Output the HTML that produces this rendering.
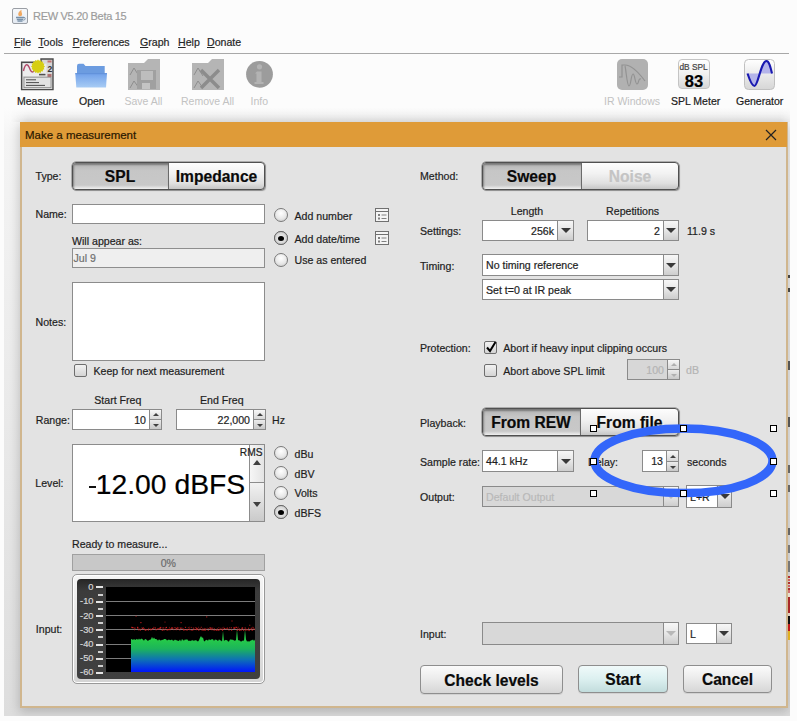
<!DOCTYPE html><html><head><meta charset="utf-8"><style>
html,body{margin:0;padding:0;width:797px;height:721px;overflow:hidden;background:#fcfcfc;position:relative;font-family:"Liberation Sans", sans-serif;}
.t{position:absolute;white-space:pre;line-height:0;-webkit-text-stroke:0.2px currentColor;}
.b{position:absolute;}
u{text-decoration:underline;text-underline-offset:1px;}
</style></head><body>
<div class="b" style="left:12px;top:8px;width:16px;height:16px;border:1.3px solid #9a9ea4;border-radius:2px;box-sizing:border-box;background:linear-gradient(#f6f8fb,#e4eaf2);"></div>
<svg class="b" style="left:12px;top:8px" width="16" height="16"><path d="M9.5 1.8 C7 3.5 5.5 5.5 6.5 7.5 C7.2 8.5 9.5 8.5 10 7 C10.6 5.5 9 4.5 9.5 1.8 Z" fill="#f0a050" opacity="0.9"/><path d="M4 9.5 h8 M4.8 11.5 h6.5 M5.5 13.2 h5" stroke="#7890a8" stroke-width="1.3"/><path d="M12 9.3 c1.6 0 1.6 2.6 -0.5 3" stroke="#7890a8" stroke-width="1" fill="none"/></svg>
<div class="t" style="left:33.00px;top:16.49px;font-size:11px;color:#9c9c9c;letter-spacing:-0.3px;">REW V5.20 Beta 15</div>
<div class="t" style="left:14.00px;top:41.93px;font-size:10.6px;color:#262626;"><u>F</u>ile</div>
<div class="t" style="left:38.30px;top:41.93px;font-size:10.6px;color:#262626;"><u>T</u>ools</div>
<div class="t" style="left:72.50px;top:41.93px;font-size:10.6px;color:#262626;"><u>P</u>references</div>
<div class="t" style="left:140.00px;top:41.93px;font-size:10.6px;color:#262626;"><u>G</u>raph</div>
<div class="t" style="left:178.00px;top:41.93px;font-size:10.6px;color:#262626;"><u>H</u>elp</div>
<div class="t" style="left:207.00px;top:41.93px;font-size:10.6px;color:#262626;"><u>D</u>onate</div>
<div class="b" style="left:4px;top:53px;width:785px;height:1px;background:#a8a8a8;"></div>
<div class="b" style="left:4px;top:108px;width:786px;height:608px;background:linear-gradient(#fcfcfc,#f4f4f4 32px,#eaeaea 292px,#dddddd);"></div>
<svg class="b" style="left:18px;top:54px" width="40" height="40">
<path d="M3.6 8.3 H23 V5 H35 V35.6 H3.6 Z" fill="#d6d6d6" stroke="#4a4a4a" stroke-width="1.4"/>
<rect x="5" y="9.6" width="23.5" height="12.5" fill="#ececec"/>
<path d="M5.5 17 C7 9.5 9.5 9.5 11 13 C12.5 17 14.5 21 17 15" stroke="#b04868" stroke-width="1.4" fill="none"/>
<text x="29.5" y="17.5" font-size="8.5" font-weight="bold" font-family="Liberation Sans" fill="#333">2</text>
<rect x="29.5" y="6.5" width="4" height="2" fill="#c07070"/>
<rect x="29.5" y="20" width="4" height="3" fill="#b07070"/>
<rect x="21" y="19.8" width="6.5" height="1.6" fill="#505050"/>
<rect x="6" y="23.2" width="27" height="10.4" fill="#e2e2e2" stroke="#8a8a8a" stroke-width="0.8"/>
<path d="M8 25.8 h10 M8 28.6 h13 M8 31.4 h19" stroke="#3a3a3a" stroke-width="0.9"/>
<polygon points="27.00,12.50 25.69,13.63 26.47,15.18 24.82,15.72 24.95,17.45 23.22,17.32 22.68,18.97 21.13,18.19 20.00,19.50 18.87,18.19 17.32,18.97 16.78,17.32 15.05,17.45 15.18,15.72 13.53,15.18 14.31,13.63 13.00,12.50 14.31,11.37 13.53,9.82 15.18,9.28 15.05,7.55 16.78,7.68 17.32,6.03 18.87,6.81 20.00,5.50 21.13,6.81 22.68,6.03 23.22,7.68 24.95,7.55 24.82,9.28 26.47,9.82 25.69,11.37" fill="#d6ce12"/>
</svg>
<svg class="b" style="left:74px;top:62px" width="34" height="28">
<path d="M3 4 Q3 1.7 5 1.7 H9.5 L11.5 4 H30.7 V13 H3 Z" fill="#6c9ce0"/>
<path d="M1.3 11.2 H33 L32 25.6 H2.3 Z" fill="url(#fg)"/><path d="M1.3 11.7 H33" stroke="#5f8fd8" stroke-width="1"/>
<defs><linearGradient id="fg" x1="0" y1="0" x2="0" y2="1"><stop offset="0" stop-color="#70a0ea"/><stop offset="1" stop-color="#a8ccf4"/></linearGradient></defs>
</svg>
<svg class="b" style="left:127px;top:58px" width="34" height="33">
<path d="M1 5 h16 l4 -4 h12 v31 h-32 z" fill="#b5b5b5"/>
<path d="M3 17 l4 -7 l5 8 M3 30 l4 -7 l5 7" stroke="#8e8e8e" stroke-width="1" fill="none"/>
<rect x="10" y="12" width="19" height="19" fill="#a0a0a0"/><rect x="14" y="13" width="12" height="9" fill="#bdbdbd"/><rect x="15" y="25" width="8" height="6" fill="#c4c4c4"/>
</svg>
<svg class="b" style="left:191px;top:58px" width="34" height="33">
<path d="M1 5 h16 l4 -4 h12 v31 h-32 z" fill="#b5b5b5"/>
<path d="M3 17 l4 -7 l5 8 M3 30 l4 -7 l5 7" stroke="#8e8e8e" stroke-width="1" fill="none"/>
<path d="M10 12 l18 18 M28 12 l-18 18" stroke="#8c8c8c" stroke-width="3.5"/>
</svg>
<svg class="b" style="left:245px;top:60px" width="30" height="30">
<circle cx="14.5" cy="14.3" r="13.4" fill="#9c9c9c"/>
<circle cx="14.5" cy="6.8" r="2.6" fill="#b3b3b3"/>
<path d="M12 11.5 h4.5 v10.5 h2 v2 h-9 v-2 h2 v-8.5 h-1.5 z" fill="#b3b3b3"/>
</svg>
<svg class="b" style="left:616px;top:58px" width="33" height="33">
<rect x="1" y="1" width="31" height="31" rx="5" fill="#b1b1b1"/>
<path d="M3 19 h3 v-12 h3 c6 0 14 8 20 16 M9 8 c1 3 2 20 4 20 c2 0 2 -12 4 -12 c2 0 2 10 4 10 c2 0 1 -6 4 -5" stroke="#929292" stroke-width="1.2" fill="none"/>
</svg>
<div class="b" style="left:678px;top:59px;width:32px;height:30px;border:1px solid #c4c4c4;border-radius:4px;box-sizing:border-box;background:linear-gradient(#ffffff,#f0f0f0 50%,#d8d8d8);"></div>
<div class="t" style="left:393.50px;width:600px;text-align:center;top:66.82px;font-size:8.3px;color:#444;">dB SPL</div>
<div class="t" style="left:394.00px;width:600px;text-align:center;top:80.68px;font-size:16.5px;color:#000;font-weight:700;">83</div>
<svg class="b" style="left:744px;top:59px" width="31" height="31">
<defs><linearGradient id="gg" x1="0" y1="0" x2="0" y2="1"><stop offset="0" stop-color="#ffffff"/><stop offset="1" stop-color="#d6d6d6"/></linearGradient></defs>
<rect x="0.5" y="0.5" width="30" height="30" rx="4" fill="url(#gg)" stroke="#c0c0c0"/>
<path d="M3.5 14.5 C6 22 8 27 10.5 27 C14 27 17 2 22.5 2 C25 2 26.5 8 28 14.5 Z" fill="#b4b4ea"/>
<path d="M3.5 14.5 C6 22 8 27 10.5 27 C14 27 17 2 22.5 2 C25 2 26.5 8 28 14.5" fill="none" stroke="#1818b0" stroke-width="2.1"/>
</svg>
<div class="t" style="left:17.00px;top:101.06px;font-size:10.5px;color:#202020;">Measure</div>
<div class="t" style="left:79.00px;top:101.06px;font-size:10.5px;color:#202020;">Open</div>
<div class="t" style="left:124.50px;top:101.06px;font-size:10.5px;color:#c2c2c2;-webkit-text-stroke:0;">Save All</div>
<div class="t" style="left:181.00px;top:101.06px;font-size:10.5px;color:#c2c2c2;-webkit-text-stroke:0;">Remove All</div>
<div class="t" style="left:250.50px;top:101.06px;font-size:10.5px;color:#c2c2c2;-webkit-text-stroke:0;">Info</div>
<div class="t" style="left:604.00px;top:101.06px;font-size:10.5px;color:#c2c2c2;-webkit-text-stroke:0;">IR Windows</div>
<div class="t" style="left:671.00px;top:101.06px;font-size:10.5px;color:#202020;">SPL Meter</div>
<div class="t" style="left:736.00px;top:101.06px;font-size:10.5px;color:#202020;">Generator</div>
<div class="b" style="left:4px;top:108px;width:786px;height:608px;overflow:hidden;"><div class="b" style="left:6px;top:0px;width:788px;height:14px;background:linear-gradient(rgba(0,0,0,0),rgba(0,0,0,0.07));-webkit-mask-image:linear-gradient(to right,transparent,#000 18px,#000 770px,transparent 788px);"></div><div class="b" style="left:16px;top:14px;width:768px;height:586px;background:#e3e3e3;border:2px solid #d0b68e;border-top:none;box-sizing:border-box;box-shadow:0 3px 10px 1px rgba(0,0,0,0.19);"></div></div>
<div class="b" style="left:20px;top:122px;width:767px;height:25px;background:#df9b38;"></div>
<div class="t" style="left:25.00px;top:134.62px;font-size:11.5px;color:#2a1800;">Make a measurement</div>
<svg class="b" style="left:765px;top:129px" width="12" height="12"><path d="M1 1 L11 11 M11 1 L1 11" stroke="#222" stroke-width="1.2"/></svg>
<div class="t" style="left:35.50px;top:176.33px;font-size:10.6px;color:#1e1e1e;">Type:</div>
<div class="b" style="left:72px;top:162px;width:193px;height:28px;border:1px solid #505050;border-radius:4px;box-shadow:0 0 0 0.5px #777, 1px 1px 1px rgba(0,0,0,0.25);box-sizing:border-box;background:linear-gradient(#fdfdfd,#f2f2f2 40%,#e0e0e0 78%,#c6c6c6);overflow:hidden;"><div style="position:absolute;left:0;top:0;width:95px;height:100%;background:linear-gradient(#b4b4b4,#c6c6c6 30%,#c8c8c8 85%,#f0f0f0 100%);box-shadow:inset 1px 2px 2px rgba(0,0,0,0.35);border-right:1px solid #6a6a6a;"></div></div>
<div class="t" style="left:-180.00px;width:600px;text-align:center;top:177.19px;font-size:15.6px;color:#0a0a0a;font-weight:700;">SPL</div>
<div class="t" style="left:-83.50px;width:600px;text-align:center;top:177.19px;font-size:15.6px;color:#0a0a0a;font-weight:700;">Impedance</div>
<div class="t" style="left:35.50px;top:213.83px;font-size:10.6px;color:#1e1e1e;">Name:</div>
<div class="b" style="left:72px;top:204px;width:193px;height:20px;background:#fff;border:1px solid #8c8c8c;box-sizing:border-box;"></div>
<div class="t" style="left:72.00px;top:240.93px;font-size:10.6px;color:#1e1e1e;">Will appear as:</div>
<div class="b" style="left:72px;top:248px;width:193px;height:20px;background:#efefef;border:1px solid #8e8e8e;box-sizing:border-box;"></div>
<div class="t" style="left:73.50px;top:257.83px;font-size:10.6px;color:#707070;">Jul 9</div>
<div class="b" style="left:274px;top:208px;width:14px;height:14px;border-radius:50%;box-sizing:border-box;border:1px solid #7a7a7a;background:radial-gradient(circle at 50% 35%,#ffffff,#e8e8e8 55%,#c4c4c4);"></div>
<div class="t" style="left:294.50px;top:215.93px;font-size:10.6px;color:#1e1e1e;">Add number</div>
<div class="b" style="left:274px;top:231px;width:14px;height:14px;border-radius:50%;box-sizing:border-box;border:1px solid #7a7a7a;background:radial-gradient(circle at 50% 35%,#ffffff,#e8e8e8 55%,#c4c4c4);"></div>
<div class="b" style="left:274px;top:231px;width:14px;height:14px;border-radius:50%;box-sizing:border-box;border:1px solid #6a6a6a;background:radial-gradient(circle at 50% 50%,#f4f4f4 0,#dadada 55%,#b8b8b8 100%);"></div>
<div class="b" style="left:278px;top:235.5px;width:6px;height:5px;border-radius:50%;background:#000;"></div>
<div class="t" style="left:294.50px;top:238.83px;font-size:10.6px;color:#1e1e1e;">Add date/time</div>
<div class="b" style="left:274px;top:253px;width:14px;height:14px;border-radius:50%;box-sizing:border-box;border:1px solid #7a7a7a;background:radial-gradient(circle at 50% 35%,#ffffff,#e8e8e8 55%,#c4c4c4);"></div>
<div class="t" style="left:294.50px;top:260.33px;font-size:10.6px;color:#1e1e1e;">Use as entered</div>
<svg class="b" style="left:375px;top:208px" width="14" height="14"><rect x="0.5" y="0.5" width="13" height="13" fill="#f4f4f4" stroke="#707070"/><path d="M1 3.5 h12" stroke="#707070"/><rect x="3" y="6" width="2" height="2" fill="#808080"/><rect x="3" y="9.5" width="2" height="2" fill="#808080"/><path d="M6.5 7 h5 M6.5 10.5 h5" stroke="#808080"/></svg>
<svg class="b" style="left:375px;top:231px" width="14" height="14"><rect x="0.5" y="0.5" width="13" height="13" fill="#f4f4f4" stroke="#707070"/><path d="M1 3.5 h12" stroke="#707070"/><rect x="3" y="6" width="2" height="2" fill="#808080"/><rect x="3" y="9.5" width="2" height="2" fill="#808080"/><path d="M6.5 7 h5 M6.5 10.5 h5" stroke="#808080"/></svg>
<div class="t" style="left:35.50px;top:321.83px;font-size:10.6px;color:#1e1e1e;">Notes:</div>
<div class="b" style="left:72px;top:282px;width:193px;height:79px;background:#fff;border:1px solid #8c8c8c;box-sizing:border-box;"></div>
<div class="b" style="left:74px;top:364px;width:13px;height:13px;border:1px solid #6e6e6e;border-radius:2px;box-sizing:border-box;background:linear-gradient(#f2f2f2,#d4d4d4);"></div>
<div class="t" style="left:93.50px;top:370.73px;font-size:10.6px;color:#1e1e1e;">Keep for next measurement</div>
<div class="t" style="left:94.30px;top:400.23px;font-size:10.6px;color:#1e1e1e;">Start Freq</div>
<div class="t" style="left:200.00px;top:400.23px;font-size:10.6px;color:#1e1e1e;">End Freq</div>
<div class="t" style="left:35.80px;top:420.03px;font-size:10.6px;color:#1e1e1e;">Range:</div>
<div class="b" style="left:72px;top:409px;width:90px;height:21px;background:#fff;border:1px solid #8a8a8a;box-sizing:border-box;"></div>
<div class="b" style="left:149px;top:409px;width:13px;height:11px;background:linear-gradient(#f7f7f7,#d8d8d8);border:1px solid #8a8a8a;box-sizing:border-box;"></div>
<div class="b" style="left:149px;top:419px;width:13px;height:11px;background:linear-gradient(#ececec,#c8c8c8);border:1px solid #8a8a8a;box-sizing:border-box;"></div>
<div class="b" style="left:152.50px;top:413.25px;width:0;height:0;border-left:3.0px solid transparent;border-right:3.0px solid transparent;border-bottom:3px solid #404040;"></div>
<div class="b" style="left:152.50px;top:423.75px;width:0;height:0;border-left:3.0px solid transparent;border-right:3.0px solid transparent;border-top:3px solid #404040;"></div>
<div class="t" style="right:651.00px;top:419.83px;font-size:10.6px;color:#1e1e1e;">10</div>
<div class="b" style="left:176px;top:409px;width:90px;height:21px;background:#fff;border:1px solid #8a8a8a;box-sizing:border-box;"></div>
<div class="b" style="left:253px;top:409px;width:13px;height:11px;background:linear-gradient(#f7f7f7,#d8d8d8);border:1px solid #8a8a8a;box-sizing:border-box;"></div>
<div class="b" style="left:253px;top:419px;width:13px;height:11px;background:linear-gradient(#ececec,#c8c8c8);border:1px solid #8a8a8a;box-sizing:border-box;"></div>
<div class="b" style="left:256.50px;top:413.25px;width:0;height:0;border-left:3.0px solid transparent;border-right:3.0px solid transparent;border-bottom:3px solid #404040;"></div>
<div class="b" style="left:256.50px;top:423.75px;width:0;height:0;border-left:3.0px solid transparent;border-right:3.0px solid transparent;border-top:3px solid #404040;"></div>
<div class="t" style="right:547.00px;top:419.83px;font-size:10.6px;color:#1e1e1e;">22,000</div>
<div class="t" style="left:272.00px;top:420.03px;font-size:10.6px;color:#1e1e1e;">Hz</div>
<div class="t" style="left:35.30px;top:483.13px;font-size:10.6px;color:#1e1e1e;">Level:</div>
<div class="b" style="left:72px;top:444px;width:193px;height:78px;background:#fff;border:1px solid #8c8c8c;box-sizing:border-box;"></div>
<div class="b" style="left:249px;top:444px;width:16px;height:39px;background:linear-gradient(90deg,#f6f6f6,#e4e4e4);border:1px solid #8c8c8c;box-sizing:border-box;"></div>
<div class="b" style="left:249px;top:482px;width:16px;height:40px;background:linear-gradient(#f2f2f2,#cacaca);border:1px solid #8c8c8c;box-sizing:border-box;"></div>
<div class="b" style="left:252.50px;top:459.50px;width:0;height:0;border-left:4.5px solid transparent;border-right:4.5px solid transparent;border-bottom:5px solid #404040;"></div>
<div class="b" style="left:252.50px;top:501.50px;width:0;height:0;border-left:4.5px solid transparent;border-right:4.5px solid transparent;border-top:5px solid #404040;"></div>
<div class="t" style="left:95.75px;top:484.49px;font-size:28.3px;color:#000;">12.00 dBFS</div>
<div class="b" style="left:88.5px;top:485.8px;width:7.299999999999997px;height:2.0px;background:#111;"></div>
<div class="t" style="right:534.50px;top:453.47px;font-size:10.2px;color:#1e1e1e;">RMS</div>
<div class="b" style="left:274px;top:446px;width:14px;height:14px;border-radius:50%;box-sizing:border-box;border:1px solid #7a7a7a;background:radial-gradient(circle at 50% 35%,#ffffff,#e8e8e8 55%,#c4c4c4);"></div>
<div class="t" style="left:294.50px;top:453.63px;font-size:10.6px;color:#1e1e1e;">dBu</div>
<div class="b" style="left:274px;top:466px;width:14px;height:14px;border-radius:50%;box-sizing:border-box;border:1px solid #7a7a7a;background:radial-gradient(circle at 50% 35%,#ffffff,#e8e8e8 55%,#c4c4c4);"></div>
<div class="t" style="left:294.50px;top:473.63px;font-size:10.6px;color:#1e1e1e;">dBV</div>
<div class="b" style="left:274px;top:485.5px;width:14px;height:14px;border-radius:50%;box-sizing:border-box;border:1px solid #7a7a7a;background:radial-gradient(circle at 50% 35%,#ffffff,#e8e8e8 55%,#c4c4c4);"></div>
<div class="t" style="left:294.50px;top:493.13px;font-size:10.6px;color:#1e1e1e;">Volts</div>
<div class="b" style="left:274px;top:505px;width:14px;height:14px;border-radius:50%;box-sizing:border-box;border:1px solid #7a7a7a;background:radial-gradient(circle at 50% 35%,#ffffff,#e8e8e8 55%,#c4c4c4);"></div>
<div class="b" style="left:274px;top:505px;width:14px;height:14px;border-radius:50%;box-sizing:border-box;border:1px solid #6a6a6a;background:radial-gradient(circle at 50% 50%,#f4f4f4 0,#dadada 55%,#b8b8b8 100%);"></div>
<div class="b" style="left:278px;top:509.5px;width:6px;height:5px;border-radius:50%;background:#000;"></div>
<div class="t" style="left:294.50px;top:512.63px;font-size:10.6px;color:#1e1e1e;">dBFS</div>
<div class="t" style="left:72.00px;top:544.33px;font-size:10.6px;color:#1e1e1e;">Ready to measure...</div>
<div class="b" style="left:72px;top:554px;width:193px;height:17px;background:#c8c8c8;border:1px solid #a0a0a0;box-sizing:border-box;"></div>
<div class="t" style="left:-131.70px;width:600px;text-align:center;top:562.73px;font-size:10.6px;color:#6c6c6c;">0%</div>
<div class="b" style="left:72px;top:574px;width:193px;height:110px;border-radius:5px;background:linear-gradient(#f6f6f6,#d4d4d4);border:1px solid #999;box-sizing:border-box;box-shadow:inset 0 0 0 1px #fff;"></div>
<div class="b" style="left:77px;top:579px;width:183px;height:100px;border-radius:4px;background:linear-gradient(#262626,#3c3c3c 12px,#404040);"></div>
<div class="b" style="left:106px;top:587px;width:149px;height:85px;background:#000;"></div>
<div class="t" style="right:703.50px;top:587.18px;font-size:9.3px;color:#d6d6d6;">0</div>
<div class="b" style="left:96px;top:586px;width:7px;height:2px;background:#e4e4e4;"></div>
<div class="b" style="left:98px;top:594px;width:5px;height:2px;background:#cfcfcf;"></div>
<div class="t" style="right:703.50px;top:601.48px;font-size:9.3px;color:#d6d6d6;">-10</div>
<div class="b" style="left:96px;top:601px;width:7px;height:2px;background:#e4e4e4;"></div>
<div class="b" style="left:98px;top:608px;width:5px;height:2px;background:#cfcfcf;"></div>
<div class="b" style="left:106px;top:601px;width:149px;height:1px;background:#7c7c7c;"></div>
<div class="t" style="right:703.50px;top:615.68px;font-size:9.3px;color:#d6d6d6;">-20</div>
<div class="b" style="left:96px;top:615px;width:7px;height:2px;background:#e4e4e4;"></div>
<div class="b" style="left:98px;top:622px;width:5px;height:2px;background:#cfcfcf;"></div>
<div class="b" style="left:106px;top:615px;width:149px;height:1px;background:#7c7c7c;"></div>
<div class="t" style="right:703.50px;top:629.98px;font-size:9.3px;color:#d6d6d6;">-30</div>
<div class="b" style="left:96px;top:629px;width:7px;height:2px;background:#e4e4e4;"></div>
<div class="b" style="left:98px;top:636px;width:5px;height:2px;background:#cfcfcf;"></div>
<div class="b" style="left:106px;top:629px;width:149px;height:1px;background:#7c7c7c;"></div>
<div class="t" style="right:703.50px;top:644.18px;font-size:9.3px;color:#d6d6d6;">-40</div>
<div class="b" style="left:96px;top:644px;width:7px;height:2px;background:#e4e4e4;"></div>
<div class="b" style="left:98px;top:651px;width:5px;height:2px;background:#cfcfcf;"></div>
<div class="b" style="left:106px;top:644px;width:149px;height:1px;background:#7c7c7c;"></div>
<div class="t" style="right:703.50px;top:658.28px;font-size:9.3px;color:#d6d6d6;">-50</div>
<div class="b" style="left:96px;top:658px;width:7px;height:2px;background:#e4e4e4;"></div>
<div class="b" style="left:98px;top:665px;width:5px;height:2px;background:#cfcfcf;"></div>
<div class="b" style="left:106px;top:658px;width:149px;height:1px;background:#7c7c7c;"></div>
<div class="t" style="right:703.50px;top:672.18px;font-size:9.3px;color:#d6d6d6;">-60</div>
<div class="b" style="left:96px;top:672px;width:7px;height:2px;background:#e4e4e4;"></div>
<svg class="b" style="left:106px;top:586px" width="149" height="86">
<defs><linearGradient id="sp" x1="0" y1="53" x2="0" y2="86" gradientUnits="userSpaceOnUse"><stop offset="0" stop-color="#26cc46"/><stop offset="0.3" stop-color="#1cb45c"/><stop offset="0.62" stop-color="#0e72b4"/><stop offset="1" stop-color="#0014fc"/></linearGradient></defs>
<path d="M25 86 L25 53 L25.0 53.3 L26.0 52.9 L27.0 54.2 L28.0 52.7 L29.0 53.9 L30.0 53.5 L31.0 52.7 L32.0 53.9 L33.0 52.6 L34.0 53.7 L35.0 52.7 L36.0 52.8 L37.0 53.7 L38.0 54.7 L39.0 52.9 L40.0 53.2 L41.0 54.2 L42.0 55.1 L43.0 54.1 L44.0 53.7 L45.0 53.2 L46.0 50.8 L47.0 52.9 L48.0 51.4 L49.0 53.0 L50.0 53.0 L51.0 53.5 L52.0 54.8 L53.0 53.2 L54.0 54.2 L55.0 54.4 L56.0 53.7 L57.0 54.1 L58.0 52.9 L59.0 52.9 L60.0 53.3 L61.0 54.5 L62.0 53.9 L63.0 53.6 L64.0 54.3 L65.0 53.9 L66.0 53.5 L67.0 54.8 L68.0 54.6 L69.0 53.4 L70.0 54.3 L71.0 54.2 L72.0 55.1 L73.0 54.7 L74.0 53.6 L75.0 55.4 L76.0 53.1 L77.0 53.9 L78.0 54.8 L79.0 53.2 L80.0 54.1 L81.0 53.0 L82.0 54.6 L83.0 54.9 L84.0 54.4 L85.0 55.2 L86.0 53.7 L87.0 54.7 L88.0 54.5 L89.0 54.4 L90.0 54.1 L91.0 55.1 L92.0 55.4 L93.0 54.2 L94.0 51.7 L95.0 50.1 L96.0 51.8 L97.0 51.6 L98.0 55.6 L99.0 55.1 L100.0 53.7 L101.0 54.0 L102.0 54.7 L103.0 53.1 L104.0 54.2 L105.0 53.5 L106.0 53.3 L107.0 53.2 L108.0 55.0 L109.0 53.4 L110.0 53.7 L111.0 54.1 L112.0 55.3 L113.0 53.3 L114.0 54.2 L115.0 54.5 L116.0 55.4 L117.0 45.0 L118.0 55.3 L119.0 53.8 L120.0 54.2 L121.0 54.1 L122.0 55.4 L123.0 55.6 L124.0 53.5 L125.0 53.6 L126.0 53.8 L127.0 53.8 L128.0 54.4 L129.0 54.7 L130.0 53.9 L131.0 43.5 L132.0 54.3 L133.0 54.2 L134.0 54.7 L135.0 55.7 L136.0 55.0 L137.0 54.6 L138.0 54.8 L139.0 43.5 L140.0 53.4 L141.0 55.6 L142.0 55.3 L143.0 55.5 L144.0 55.3 L145.0 54.3 L146.0 54.3 L147.0 53.6 L148.0 54.9 L149.0 53.5 L149 86 Z" fill="url(#sp)"/>
<rect x="25.2" y="40.9" width="1.2" height="1.2" fill="#d82020" opacity="0.65"/><rect x="25.2" y="40.7" width="1" height="1" fill="#c02020" opacity="0.6"/><rect x="26.0" y="41.0" width="1.2" height="1.2" fill="#d82020" opacity="0.89"/><rect x="27.3" y="41.2" width="1.2" height="1.2" fill="#d82020" opacity="0.66"/><rect x="28.0" y="43.4" width="1" height="1" fill="#c02020" opacity="0.6"/><rect x="28.1" y="42.2" width="1.2" height="1.2" fill="#d82020" opacity="0.55"/><rect x="28.8" y="41.5" width="1" height="1" fill="#c02020" opacity="0.6"/><rect x="29.5" y="29.7" width="1.2" height="1.2" fill="#d82020" opacity="0.57"/><rect x="31.0" y="40.8" width="1.2" height="1.2" fill="#d82020" opacity="0.89"/><rect x="31.2" y="41.5" width="1.2" height="1.2" fill="#d82020" opacity="0.85"/><rect x="32.2" y="43.2" width="1.2" height="1.2" fill="#d82020" opacity="0.87"/><rect x="33.8" y="43.4" width="1.2" height="1.2" fill="#d82020" opacity="0.83"/><rect x="33.4" y="42.4" width="1" height="1" fill="#c02020" opacity="0.6"/><rect x="34.3" y="36.0" width="1.2" height="1.2" fill="#d82020" opacity="0.81"/><rect x="36.0" y="42.1" width="1.2" height="1.2" fill="#d82020" opacity="0.93"/><rect x="35.2" y="41.4" width="1" height="1" fill="#c02020" opacity="0.6"/><rect x="36.6" y="41.3" width="1.2" height="1.2" fill="#d82020" opacity="0.91"/><rect x="37.8" y="42.2" width="1.2" height="1.2" fill="#d82020" opacity="0.54"/><rect x="38.8" y="43.6" width="1.2" height="1.2" fill="#d82020" opacity="0.72"/><rect x="38.3" y="43.2" width="1" height="1" fill="#c02020" opacity="0.6"/><rect x="39.4" y="43.3" width="1.2" height="1.2" fill="#d82020" opacity="0.68"/><rect x="40.1" y="43.0" width="1.2" height="1.2" fill="#d82020" opacity="0.57"/><rect x="41.8" y="43.3" width="1.2" height="1.2" fill="#d82020" opacity="0.94"/><rect x="42.1" y="41.8" width="1.2" height="1.2" fill="#d82020" opacity="0.51"/><rect x="43.9" y="42.8" width="1.2" height="1.2" fill="#d82020" opacity="0.70"/><rect x="44.3" y="43.3" width="1.2" height="1.2" fill="#d82020" opacity="0.63"/><rect x="44.3" y="42.6" width="1" height="1" fill="#c02020" opacity="0.6"/><rect x="45.9" y="42.0" width="1.2" height="1.2" fill="#d82020" opacity="0.66"/><rect x="45.9" y="42.6" width="1" height="1" fill="#c02020" opacity="0.6"/><rect x="46.5" y="42.0" width="1.2" height="1.2" fill="#d82020" opacity="0.74"/><rect x="47.2" y="40.8" width="1.2" height="1.2" fill="#d82020" opacity="0.50"/><rect x="48.7" y="41.3" width="1.2" height="1.2" fill="#d82020" opacity="0.75"/><rect x="48.6" y="42.4" width="1" height="1" fill="#c02020" opacity="0.6"/><rect x="49.6" y="43.2" width="1.2" height="1.2" fill="#d82020" opacity="0.61"/><rect x="49.5" y="43.2" width="1" height="1" fill="#c02020" opacity="0.6"/><rect x="50.9" y="42.5" width="1.2" height="1.2" fill="#d82020" opacity="0.70"/><rect x="51.7" y="42.3" width="1.2" height="1.2" fill="#d82020" opacity="0.70"/><rect x="52.7" y="42.2" width="1.2" height="1.2" fill="#d82020" opacity="0.89"/><rect x="53.9" y="41.5" width="1.2" height="1.2" fill="#d82020" opacity="0.88"/><rect x="53.4" y="41.1" width="1" height="1" fill="#c02020" opacity="0.6"/><rect x="54.1" y="40.9" width="1.2" height="1.2" fill="#d82020" opacity="0.80"/><rect x="55.7" y="43.6" width="1.2" height="1.2" fill="#d82020" opacity="0.80"/><rect x="56.0" y="43.5" width="1" height="1" fill="#c02020" opacity="0.6"/><rect x="56.4" y="41.4" width="1.2" height="1.2" fill="#d82020" opacity="0.72"/><rect x="57.4" y="43.4" width="1.2" height="1.2" fill="#d82020" opacity="0.73"/><rect x="57.3" y="41.3" width="1" height="1" fill="#c02020" opacity="0.6"/><rect x="58.4" y="35.5" width="1.2" height="1.2" fill="#d82020" opacity="0.51"/><rect x="58.5" y="42.7" width="1" height="1" fill="#c02020" opacity="0.6"/><rect x="59.8" y="40.9" width="1.2" height="1.2" fill="#d82020" opacity="0.94"/><rect x="59.0" y="41.5" width="1" height="1" fill="#c02020" opacity="0.6"/><rect x="60.1" y="43.2" width="1.2" height="1.2" fill="#d82020" opacity="0.69"/><rect x="61.1" y="43.3" width="1.2" height="1.2" fill="#d82020" opacity="0.91"/><rect x="62.1" y="42.9" width="1.2" height="1.2" fill="#d82020" opacity="0.81"/><rect x="62.9" y="40.9" width="1" height="1" fill="#c02020" opacity="0.6"/><rect x="63.1" y="42.7" width="1.2" height="1.2" fill="#d82020" opacity="0.89"/><rect x="63.5" y="43.5" width="1" height="1" fill="#c02020" opacity="0.6"/><rect x="64.9" y="41.8" width="1.2" height="1.2" fill="#d82020" opacity="0.62"/><rect x="64.2" y="42.4" width="1" height="1" fill="#c02020" opacity="0.6"/><rect x="65.1" y="41.1" width="1.2" height="1.2" fill="#d82020" opacity="0.59"/><rect x="65.8" y="41.7" width="1" height="1" fill="#c02020" opacity="0.6"/><rect x="66.2" y="41.6" width="1.2" height="1.2" fill="#d82020" opacity="0.66"/><rect x="66.0" y="41.5" width="1" height="1" fill="#c02020" opacity="0.6"/><rect x="67.2" y="43.0" width="1.2" height="1.2" fill="#d82020" opacity="0.71"/><rect x="68.4" y="41.0" width="1.2" height="1.2" fill="#d82020" opacity="0.72"/><rect x="69.7" y="42.0" width="1.2" height="1.2" fill="#d82020" opacity="0.94"/><rect x="69.7" y="43.4" width="1" height="1" fill="#c02020" opacity="0.6"/><rect x="70.3" y="42.7" width="1.2" height="1.2" fill="#d82020" opacity="0.52"/><rect x="70.7" y="40.9" width="1" height="1" fill="#c02020" opacity="0.6"/><rect x="71.1" y="41.5" width="1.2" height="1.2" fill="#d82020" opacity="0.88"/><rect x="72.2" y="42.8" width="1.2" height="1.2" fill="#d82020" opacity="0.63"/><rect x="72.4" y="41.2" width="1" height="1" fill="#c02020" opacity="0.6"/><rect x="74.0" y="41.5" width="1.2" height="1.2" fill="#d82020" opacity="0.75"/><rect x="73.3" y="43.8" width="1" height="1" fill="#c02020" opacity="0.6"/><rect x="74.5" y="36.0" width="1.2" height="1.2" fill="#d82020" opacity="0.73"/><rect x="74.0" y="42.3" width="1" height="1" fill="#c02020" opacity="0.6"/><rect x="75.4" y="41.5" width="1.2" height="1.2" fill="#d82020" opacity="0.52"/><rect x="75.2" y="41.7" width="1" height="1" fill="#c02020" opacity="0.6"/><rect x="76.8" y="42.6" width="1.2" height="1.2" fill="#d82020" opacity="0.80"/><rect x="77.3" y="43.5" width="1.2" height="1.2" fill="#d82020" opacity="0.94"/><rect x="77.6" y="43.0" width="1" height="1" fill="#c02020" opacity="0.6"/><rect x="78.9" y="40.8" width="1.2" height="1.2" fill="#d82020" opacity="0.78"/><rect x="79.5" y="43.3" width="1.2" height="1.2" fill="#d82020" opacity="0.73"/><rect x="80.6" y="43.3" width="1.2" height="1.2" fill="#d82020" opacity="0.90"/><rect x="81.0" y="42.9" width="1.2" height="1.2" fill="#d82020" opacity="0.56"/><rect x="81.8" y="41.0" width="1" height="1" fill="#c02020" opacity="0.6"/><rect x="82.6" y="42.5" width="1.2" height="1.2" fill="#d82020" opacity="0.81"/><rect x="82.8" y="40.7" width="1" height="1" fill="#c02020" opacity="0.6"/><rect x="83.5" y="43.1" width="1.2" height="1.2" fill="#d82020" opacity="0.80"/><rect x="83.3" y="43.1" width="1" height="1" fill="#c02020" opacity="0.6"/><rect x="84.7" y="40.9" width="1.2" height="1.2" fill="#d82020" opacity="0.59"/><rect x="85.4" y="43.8" width="1.2" height="1.2" fill="#d82020" opacity="0.72"/><rect x="86.6" y="43.2" width="1.2" height="1.2" fill="#d82020" opacity="0.53"/><rect x="86.7" y="41.5" width="1" height="1" fill="#c02020" opacity="0.6"/><rect x="87.0" y="41.7" width="1.2" height="1.2" fill="#d82020" opacity="0.53"/><rect x="87.7" y="42.9" width="1" height="1" fill="#c02020" opacity="0.6"/><rect x="88.5" y="42.9" width="1.2" height="1.2" fill="#d82020" opacity="0.71"/><rect x="88.9" y="41.1" width="1" height="1" fill="#c02020" opacity="0.6"/><rect x="89.9" y="41.3" width="1.2" height="1.2" fill="#d82020" opacity="0.51"/><rect x="90.0" y="43.3" width="1" height="1" fill="#c02020" opacity="0.6"/><rect x="90.2" y="42.1" width="1.2" height="1.2" fill="#d82020" opacity="0.93"/><rect x="90.1" y="42.6" width="1" height="1" fill="#c02020" opacity="0.6"/><rect x="91.1" y="42.4" width="1.2" height="1.2" fill="#d82020" opacity="0.87"/><rect x="92.2" y="43.5" width="1.2" height="1.2" fill="#d82020" opacity="0.90"/><rect x="92.0" y="40.8" width="1" height="1" fill="#c02020" opacity="0.6"/><rect x="93.3" y="42.3" width="1.2" height="1.2" fill="#d82020" opacity="0.56"/><rect x="93.8" y="41.7" width="1" height="1" fill="#c02020" opacity="0.6"/><rect x="94.8" y="40.7" width="1.2" height="1.2" fill="#d82020" opacity="0.55"/><rect x="95.3" y="43.0" width="1.2" height="1.2" fill="#d82020" opacity="0.67"/><rect x="95.6" y="43.9" width="1" height="1" fill="#c02020" opacity="0.6"/><rect x="96.3" y="41.9" width="1.2" height="1.2" fill="#d82020" opacity="0.52"/><rect x="96.3" y="43.4" width="1" height="1" fill="#c02020" opacity="0.6"/><rect x="97.3" y="43.7" width="1.2" height="1.2" fill="#d82020" opacity="0.73"/><rect x="98.0" y="41.9" width="1" height="1" fill="#c02020" opacity="0.6"/><rect x="98.6" y="43.5" width="1.2" height="1.2" fill="#d82020" opacity="0.91"/><rect x="99.0" y="42.5" width="1.2" height="1.2" fill="#d82020" opacity="0.83"/><rect x="99.6" y="43.1" width="1" height="1" fill="#c02020" opacity="0.6"/><rect x="100.1" y="30.3" width="1.2" height="1.2" fill="#d82020" opacity="0.71"/><rect x="100.7" y="41.7" width="1" height="1" fill="#c02020" opacity="0.6"/><rect x="101.7" y="43.8" width="1.2" height="1.2" fill="#d82020" opacity="0.64"/><rect x="102.2" y="42.0" width="1.2" height="1.2" fill="#d82020" opacity="0.59"/><rect x="103.9" y="42.3" width="1.2" height="1.2" fill="#d82020" opacity="0.95"/><rect x="103.2" y="41.1" width="1" height="1" fill="#c02020" opacity="0.6"/><rect x="104.1" y="41.0" width="1.2" height="1.2" fill="#d82020" opacity="0.61"/><rect x="104.9" y="42.5" width="1" height="1" fill="#c02020" opacity="0.6"/><rect x="105.4" y="43.1" width="1.2" height="1.2" fill="#d82020" opacity="0.74"/><rect x="105.1" y="41.8" width="1" height="1" fill="#c02020" opacity="0.6"/><rect x="106.1" y="41.6" width="1.2" height="1.2" fill="#d82020" opacity="0.73"/><rect x="107.3" y="43.5" width="1.2" height="1.2" fill="#d82020" opacity="0.61"/><rect x="108.0" y="42.1" width="1" height="1" fill="#c02020" opacity="0.6"/><rect x="108.0" y="43.4" width="1.2" height="1.2" fill="#d82020" opacity="0.51"/><rect x="109.6" y="43.6" width="1.2" height="1.2" fill="#d82020" opacity="0.50"/><rect x="109.8" y="43.7" width="1" height="1" fill="#c02020" opacity="0.6"/><rect x="110.2" y="43.4" width="1.2" height="1.2" fill="#d82020" opacity="0.55"/><rect x="110.7" y="42.4" width="1" height="1" fill="#c02020" opacity="0.6"/><rect x="111.6" y="43.7" width="1.2" height="1.2" fill="#d82020" opacity="0.84"/><rect x="111.0" y="42.5" width="1" height="1" fill="#c02020" opacity="0.6"/><rect x="112.9" y="43.2" width="1.2" height="1.2" fill="#d82020" opacity="0.79"/><rect x="112.3" y="41.1" width="1" height="1" fill="#c02020" opacity="0.6"/><rect x="113.1" y="42.7" width="1.2" height="1.2" fill="#d82020" opacity="0.53"/><rect x="114.2" y="42.6" width="1.2" height="1.2" fill="#d82020" opacity="0.77"/><rect x="114.5" y="41.7" width="1" height="1" fill="#c02020" opacity="0.6"/><rect x="115.9" y="43.8" width="1.2" height="1.2" fill="#d82020" opacity="0.71"/><rect x="116.0" y="41.5" width="1" height="1" fill="#c02020" opacity="0.6"/><rect x="116.0" y="43.0" width="1.2" height="1.2" fill="#d82020" opacity="0.72"/><rect x="117.7" y="42.0" width="1.2" height="1.2" fill="#d82020" opacity="0.92"/><rect x="117.3" y="40.8" width="1" height="1" fill="#c02020" opacity="0.6"/><rect x="118.2" y="42.0" width="1.2" height="1.2" fill="#d82020" opacity="0.86"/><rect x="120.0" y="42.3" width="1.2" height="1.2" fill="#d82020" opacity="0.64"/><rect x="120.8" y="41.4" width="1.2" height="1.2" fill="#d82020" opacity="0.63"/><rect x="121.2" y="42.3" width="1.2" height="1.2" fill="#d82020" opacity="0.69"/><rect x="122.4" y="43.7" width="1.2" height="1.2" fill="#d82020" opacity="0.60"/><rect x="123.1" y="41.2" width="1.2" height="1.2" fill="#d82020" opacity="0.68"/><rect x="125.0" y="43.5" width="1.2" height="1.2" fill="#d82020" opacity="0.92"/><rect x="124.9" y="41.3" width="1" height="1" fill="#c02020" opacity="0.6"/><rect x="125.4" y="34.4" width="1.2" height="1.2" fill="#d82020" opacity="0.67"/><rect x="125.0" y="41.2" width="1" height="1" fill="#c02020" opacity="0.6"/><rect x="127.0" y="41.6" width="1.2" height="1.2" fill="#d82020" opacity="0.56"/><rect x="127.8" y="41.4" width="1.2" height="1.2" fill="#d82020" opacity="0.87"/><rect x="127.5" y="40.9" width="1" height="1" fill="#c02020" opacity="0.6"/><rect x="128.2" y="41.9" width="1.2" height="1.2" fill="#d82020" opacity="0.66"/><rect x="129.8" y="40.8" width="1.2" height="1.2" fill="#d82020" opacity="0.85"/><rect x="129.1" y="40.8" width="1" height="1" fill="#c02020" opacity="0.6"/><rect x="130.7" y="43.6" width="1.2" height="1.2" fill="#d82020" opacity="0.90"/><rect x="131.0" y="41.6" width="1" height="1" fill="#c02020" opacity="0.6"/><rect x="131.7" y="42.7" width="1.2" height="1.2" fill="#d82020" opacity="0.64"/><rect x="131.8" y="40.7" width="1" height="1" fill="#c02020" opacity="0.6"/><rect x="132.9" y="43.6" width="1.2" height="1.2" fill="#d82020" opacity="0.51"/><rect x="133.0" y="42.2" width="1" height="1" fill="#c02020" opacity="0.6"/><rect x="133.3" y="43.8" width="1.2" height="1.2" fill="#d82020" opacity="0.69"/><rect x="133.2" y="43.7" width="1" height="1" fill="#c02020" opacity="0.6"/><rect x="134.8" y="43.3" width="1.2" height="1.2" fill="#d82020" opacity="0.85"/><rect x="135.4" y="41.7" width="1.2" height="1.2" fill="#d82020" opacity="0.85"/><rect x="135.8" y="41.3" width="1" height="1" fill="#c02020" opacity="0.6"/><rect x="136.0" y="41.5" width="1.2" height="1.2" fill="#d82020" opacity="0.75"/><rect x="136.9" y="43.8" width="1" height="1" fill="#c02020" opacity="0.6"/><rect x="137.1" y="43.9" width="1.2" height="1.2" fill="#d82020" opacity="0.54"/><rect x="137.4" y="43.0" width="1" height="1" fill="#c02020" opacity="0.6"/><rect x="138.6" y="41.4" width="1.2" height="1.2" fill="#d82020" opacity="0.80"/><rect x="139.1" y="43.4" width="1.2" height="1.2" fill="#d82020" opacity="0.88"/><rect x="139.4" y="42.5" width="1" height="1" fill="#c02020" opacity="0.6"/><rect x="140.2" y="43.1" width="1.2" height="1.2" fill="#d82020" opacity="0.61"/><rect x="140.6" y="43.5" width="1" height="1" fill="#c02020" opacity="0.6"/><rect x="142.0" y="41.7" width="1.2" height="1.2" fill="#d82020" opacity="0.73"/><rect x="141.7" y="43.3" width="1" height="1" fill="#c02020" opacity="0.6"/><rect x="142.5" y="43.9" width="1.2" height="1.2" fill="#d82020" opacity="0.87"/><rect x="143.1" y="38.7" width="1.2" height="1.2" fill="#d82020" opacity="0.59"/><rect x="144.4" y="42.6" width="1.2" height="1.2" fill="#d82020" opacity="0.89"/><rect x="144.8" y="41.5" width="1" height="1" fill="#c02020" opacity="0.6"/><rect x="145.6" y="43.7" width="1.2" height="1.2" fill="#d82020" opacity="0.78"/><rect x="145.1" y="41.9" width="1" height="1" fill="#c02020" opacity="0.6"/><rect x="146.6" y="41.4" width="1.2" height="1.2" fill="#d82020" opacity="0.79"/><rect x="146.3" y="40.7" width="1" height="1" fill="#c02020" opacity="0.6"/><rect x="147.3" y="42.9" width="1.2" height="1.2" fill="#d82020" opacity="0.59"/><rect x="148.1" y="42.5" width="1.2" height="1.2" fill="#d82020" opacity="0.68"/>
</svg>
<div class="t" style="left:35.80px;top:629.13px;font-size:10.6px;color:#1e1e1e;">Input:</div>
<div class="t" style="left:420.00px;top:176.13px;font-size:10.6px;color:#1e1e1e;">Method:</div>
<div class="b" style="left:482px;top:162px;width:197px;height:28px;border:1px solid #505050;border-radius:4px;box-shadow:0 0 0 0.5px #777, 1px 1px 1px rgba(0,0,0,0.25);box-sizing:border-box;background:linear-gradient(#fdfdfd,#f2f2f2 40%,#e0e0e0 78%,#c6c6c6);overflow:hidden;"><div style="position:absolute;left:0;top:0;width:98px;height:100%;background:linear-gradient(#b4b4b4,#c6c6c6 30%,#c8c8c8 85%,#f0f0f0 100%);box-shadow:inset 1px 2px 2px rgba(0,0,0,0.35);border-right:1px solid #6a6a6a;"></div></div>
<div class="t" style="left:231.50px;width:600px;text-align:center;top:177.19px;font-size:15.6px;color:#0a0a0a;font-weight:700;">Sweep</div>
<div class="t" style="left:330.00px;width:600px;text-align:center;top:177.19px;font-size:15.6px;color:#c4c4c4;font-weight:700;">Noise</div>
<div class="t" style="left:227.00px;width:600px;text-align:center;top:211.13px;font-size:10.6px;color:#1e1e1e;">Length</div>
<div class="t" style="left:332.60px;width:600px;text-align:center;top:211.13px;font-size:10.6px;color:#1e1e1e;">Repetitions</div>
<div class="t" style="left:420.00px;top:230.93px;font-size:10.6px;color:#1e1e1e;">Settings:</div>
<div class="b" style="left:482px;top:220px;width:92px;height:21px;background:#fff;border:1px solid #8a8a8a;box-sizing:border-box;"></div>
<div class="b" style="left:557px;top:220px;width:17px;height:21px;background:linear-gradient(#f7f7f7,#e6e6e6 50%,#cdcdcd);border:1px solid #8a8a8a;box-sizing:border-box;"></div>
<div class="b" style="left:560.50px;top:228.05px;width:0;height:0;border-left:5.0px solid transparent;border-right:5.0px solid transparent;border-top:5.5px solid #383838;"></div>
<div class="t" style="right:243.00px;top:230.83px;font-size:10.6px;color:#1e1e1e;">256k</div>
<div class="b" style="left:587px;top:220px;width:92px;height:21px;background:#fff;border:1px solid #8a8a8a;box-sizing:border-box;"></div>
<div class="b" style="left:663px;top:220px;width:16px;height:21px;background:linear-gradient(#f7f7f7,#e6e6e6 50%,#cdcdcd);border:1px solid #8a8a8a;box-sizing:border-box;"></div>
<div class="b" style="left:666.00px;top:228.05px;width:0;height:0;border-left:5.0px solid transparent;border-right:5.0px solid transparent;border-top:5.5px solid #383838;"></div>
<div class="t" style="right:137.00px;top:230.83px;font-size:10.6px;color:#1e1e1e;">2</div>
<div class="t" style="left:687.00px;top:230.93px;font-size:10.6px;color:#1e1e1e;">11.9 s</div>
<div class="t" style="left:420.00px;top:266.03px;font-size:10.6px;color:#1e1e1e;">Timing:</div>
<div class="b" style="left:482px;top:254px;width:197px;height:22px;background:#fff;border:1px solid #8a8a8a;box-sizing:border-box;"></div>
<div class="b" style="left:663px;top:254px;width:16px;height:22px;background:linear-gradient(#f7f7f7,#e6e6e6 50%,#cdcdcd);border:1px solid #8a8a8a;box-sizing:border-box;"></div>
<div class="b" style="left:666.00px;top:262.55px;width:0;height:0;border-left:5.0px solid transparent;border-right:5.0px solid transparent;border-top:5.5px solid #383838;"></div>
<div class="t" style="left:486.00px;top:265.33px;font-size:10.6px;color:#1e1e1e;">No timing reference</div>
<div class="b" style="left:482px;top:279px;width:197px;height:21px;background:#fff;border:1px solid #8a8a8a;box-sizing:border-box;"></div>
<div class="b" style="left:663px;top:279px;width:16px;height:21px;background:linear-gradient(#f7f7f7,#e6e6e6 50%,#cdcdcd);border:1px solid #8a8a8a;box-sizing:border-box;"></div>
<div class="b" style="left:666.00px;top:287.05px;width:0;height:0;border-left:5.0px solid transparent;border-right:5.0px solid transparent;border-top:5.5px solid #383838;"></div>
<div class="t" style="left:486.00px;top:289.83px;font-size:10.6px;color:#1e1e1e;">Set t=0 at IR peak</div>
<div class="t" style="left:420.00px;top:347.73px;font-size:10.6px;color:#1e1e1e;">Protection:</div>
<div class="b" style="left:484px;top:341px;width:13px;height:13px;border:1px solid #6e6e6e;border-radius:2px;box-sizing:border-box;background:linear-gradient(#f2f2f2,#d4d4d4);"></div>
<svg class="b" style="left:484px;top:340px" width="14" height="14"><path d="M3 7.5 L6 11 L11.5 2" fill="none" stroke="#000" stroke-width="2"/></svg>
<div class="t" style="left:503.30px;top:348.33px;font-size:10.6px;color:#1e1e1e;">Abort if heavy input clipping occurs</div>
<div class="b" style="left:484px;top:364px;width:13px;height:13px;border:1px solid #6e6e6e;border-radius:2px;box-sizing:border-box;background:linear-gradient(#f2f2f2,#d4d4d4);"></div>
<div class="t" style="left:503.30px;top:371.33px;font-size:10.6px;color:#1e1e1e;">Abort above SPL limit</div>
<div class="b" style="left:627px;top:359px;width:53px;height:21px;background:#d7d7d7;border:1px solid #8a8a8a;box-sizing:border-box;"></div>
<div class="b" style="left:667px;top:359px;width:13px;height:11px;background:linear-gradient(#f7f7f7,#d8d8d8);border:1px solid #8a8a8a;box-sizing:border-box;"></div>
<div class="b" style="left:667px;top:369px;width:13px;height:11px;background:linear-gradient(#ececec,#c8c8c8);border:1px solid #8a8a8a;box-sizing:border-box;"></div>
<div class="b" style="left:670.50px;top:363.25px;width:0;height:0;border-left:3.0px solid transparent;border-right:3.0px solid transparent;border-bottom:3px solid #b0b0b0;"></div>
<div class="b" style="left:670.50px;top:373.75px;width:0;height:0;border-left:3.0px solid transparent;border-right:3.0px solid transparent;border-top:3px solid #b0b0b0;"></div>
<div class="t" style="right:133.00px;top:369.83px;font-size:10.6px;color:#b4b4b4;">100</div>
<div class="t" style="left:686.00px;top:370.33px;font-size:10.6px;color:#b4b4b4;">dB</div>
<div class="t" style="left:420.00px;top:423.13px;font-size:10.6px;color:#1e1e1e;">Playback:</div>
<div class="b" style="left:482px;top:408px;width:197px;height:28px;border:1px solid #505050;border-radius:4px;box-shadow:0 0 0 0.5px #777, 1px 1px 1px rgba(0,0,0,0.25);box-sizing:border-box;background:linear-gradient(#fdfdfd,#f2f2f2 40%,#e0e0e0 78%,#c6c6c6);overflow:hidden;"><div style="position:absolute;left:0;top:0;width:97px;height:100%;background:linear-gradient(#b4b4b4,#c6c6c6 30%,#c8c8c8 85%,#f0f0f0 100%);box-shadow:inset 1px 2px 2px rgba(0,0,0,0.35);border-right:1px solid #6a6a6a;"></div></div>
<div class="t" style="left:231.00px;width:600px;text-align:center;top:423.19px;font-size:15.6px;color:#0a0a0a;font-weight:700;">From REW</div>
<div class="t" style="left:329.50px;width:600px;text-align:center;top:423.19px;font-size:15.6px;color:#0a0a0a;font-weight:700;">From file</div>
<div class="t" style="left:420.00px;top:462.33px;font-size:10.6px;color:#1e1e1e;">Sample rate:</div>
<div class="b" style="left:482px;top:450px;width:92px;height:22px;background:#fff;border:1px solid #8a8a8a;box-sizing:border-box;"></div>
<div class="b" style="left:557px;top:450px;width:17px;height:22px;background:linear-gradient(#f7f7f7,#e6e6e6 50%,#cdcdcd);border:1px solid #8a8a8a;box-sizing:border-box;"></div>
<div class="b" style="left:560.50px;top:458.55px;width:0;height:0;border-left:5.0px solid transparent;border-right:5.0px solid transparent;border-top:5.5px solid #383838;"></div>
<div class="t" style="left:486.00px;top:461.33px;font-size:10.6px;color:#1e1e1e;">44.1 kHz</div>
<div class="t" style="left:588.00px;top:462.33px;font-size:10.6px;color:#1e1e1e;">Delay:</div>
<div class="b" style="left:642px;top:450px;width:37px;height:22px;background:#fff;border:1px solid #8a8a8a;box-sizing:border-box;"></div>
<div class="b" style="left:666px;top:450px;width:13px;height:12px;background:linear-gradient(#f7f7f7,#d8d8d8);border:1px solid #8a8a8a;box-sizing:border-box;"></div>
<div class="b" style="left:666px;top:461px;width:13px;height:11px;background:linear-gradient(#ececec,#c8c8c8);border:1px solid #8a8a8a;box-sizing:border-box;"></div>
<div class="b" style="left:669.50px;top:454.50px;width:0;height:0;border-left:3.0px solid transparent;border-right:3.0px solid transparent;border-bottom:3px solid #404040;"></div>
<div class="b" style="left:669.50px;top:465.50px;width:0;height:0;border-left:3.0px solid transparent;border-right:3.0px solid transparent;border-top:3px solid #404040;"></div>
<div class="t" style="right:134.00px;top:461.33px;font-size:10.6px;color:#1e1e1e;">13</div>
<div class="t" style="left:687.00px;top:462.33px;font-size:10.6px;color:#1e1e1e;">seconds</div>
<div class="t" style="left:420.00px;top:496.93px;font-size:10.6px;color:#1e1e1e;">Output:</div>
<div class="b" style="left:482px;top:486px;width:197px;height:21px;background:#d8d8d8;border:1px solid #8a8a8a;box-sizing:border-box;"></div>
<div class="b" style="left:663px;top:486px;width:16px;height:21px;background:linear-gradient(#f7f7f7,#e6e6e6 50%,#cdcdcd);border:1px solid #8a8a8a;box-sizing:border-box;"></div>
<div class="b" style="left:666.00px;top:494.05px;width:0;height:0;border-left:5.0px solid transparent;border-right:5.0px solid transparent;border-top:5.5px solid #b8b8b8;"></div>
<div class="t" style="left:486.00px;top:496.83px;font-size:10.6px;color:#b8b8b8;">Default Output</div>
<div class="b" style="left:686px;top:485px;width:46px;height:23px;background:#fff;border:1px solid #8a8a8a;box-sizing:border-box;"></div>
<div class="b" style="left:717px;top:485px;width:15px;height:23px;background:linear-gradient(#f7f7f7,#e6e6e6 50%,#cdcdcd);border:1px solid #8a8a8a;box-sizing:border-box;"></div>
<div class="b" style="left:719.50px;top:494.05px;width:0;height:0;border-left:5.0px solid transparent;border-right:5.0px solid transparent;border-top:5.5px solid #383838;"></div>
<div class="t" style="left:690.00px;top:496.83px;font-size:10.6px;color:#1e1e1e;">L+R</div>
<div class="t" style="left:420.00px;top:633.93px;font-size:10.6px;color:#1e1e1e;">Input:</div>
<div class="b" style="left:482px;top:622px;width:197px;height:23px;background:#d8d8d8;border:1px solid #8a8a8a;box-sizing:border-box;"></div>
<div class="b" style="left:663px;top:622px;width:16px;height:23px;background:linear-gradient(#f7f7f7,#e6e6e6 50%,#cdcdcd);border:1px solid #8a8a8a;box-sizing:border-box;"></div>
<div class="b" style="left:666.00px;top:631.05px;width:0;height:0;border-left:5.0px solid transparent;border-right:5.0px solid transparent;border-top:5.5px solid #b8b8b8;"></div>
<div class="b" style="left:686px;top:623px;width:46px;height:21px;background:#fff;border:1px solid #8a8a8a;box-sizing:border-box;"></div>
<div class="b" style="left:716px;top:623px;width:16px;height:21px;background:linear-gradient(#f7f7f7,#e6e6e6 50%,#cdcdcd);border:1px solid #8a8a8a;box-sizing:border-box;"></div>
<div class="b" style="left:719.00px;top:631.05px;width:0;height:0;border-left:5.0px solid transparent;border-right:5.0px solid transparent;border-top:5.5px solid #383838;"></div>
<div class="t" style="left:690.00px;top:633.83px;font-size:10.6px;color:#1e1e1e;">L</div>
<div class="b" style="left:420px;top:665px;width:143px;height:29px;border:1px solid #8e8e8e;border-radius:4px;box-sizing:border-box;background:linear-gradient(#fbfbfb,#ececec 45%,#d6d6d6);box-shadow:0 1px 0 rgba(0,0,0,0.08);"></div>
<div class="t" style="left:191.50px;width:600px;text-align:center;top:680.89px;font-size:15.6px;color:#0a0a0a;font-weight:700;">Check levels</div>
<div class="b" style="left:578px;top:665px;width:90px;height:28px;border:1px solid #8e8e8e;border-radius:4px;box-sizing:border-box;background:linear-gradient(#f0fafa,#dcf0f0 50%,#c2dcdc);box-shadow:0 1px 0 rgba(0,0,0,0.08);"></div>
<div class="t" style="left:323.00px;width:600px;text-align:center;top:680.39px;font-size:15.6px;color:#0a0a0a;font-weight:700;">Start</div>
<div class="b" style="left:683px;top:665px;width:89px;height:28px;border:1px solid #8e8e8e;border-radius:4px;box-sizing:border-box;background:linear-gradient(#fbfbfb,#ececec 45%,#d6d6d6);box-shadow:0 1px 0 rgba(0,0,0,0.08);"></div>
<div class="t" style="left:427.50px;width:600px;text-align:center;top:680.39px;font-size:15.6px;color:#0a0a0a;font-weight:700;">Cancel</div>
<svg class="b" style="left:580px;top:415px" width="210" height="95"><ellipse cx="103.5" cy="45.8" rx="89" ry="32.3" fill="none" stroke="#3366fa" stroke-width="8.5"/></svg>
<div class="b" style="left:590.0px;top:425.0px;width:7px;height:7px;background:#fff;border:1px solid #000;box-sizing:border-box;"></div>
<div class="b" style="left:590.0px;top:457.8px;width:7px;height:7px;background:#fff;border:1px solid #000;box-sizing:border-box;"></div>
<div class="b" style="left:590.0px;top:490.0px;width:7px;height:7px;background:#fff;border:1px solid #000;box-sizing:border-box;"></div>
<div class="b" style="left:680.0px;top:425.0px;width:7px;height:7px;background:#fff;border:1px solid #000;box-sizing:border-box;"></div>
<div class="b" style="left:680.0px;top:490.0px;width:7px;height:7px;background:#fff;border:1px solid #000;box-sizing:border-box;"></div>
<div class="b" style="left:770.0px;top:425.0px;width:7px;height:7px;background:#fff;border:1px solid #000;box-sizing:border-box;"></div>
<div class="b" style="left:770.0px;top:457.8px;width:7px;height:7px;background:#fff;border:1px solid #000;box-sizing:border-box;"></div>
<div class="b" style="left:770.0px;top:490.0px;width:7px;height:7px;background:#fff;border:1px solid #000;box-sizing:border-box;"></div>
<div class="b" style="left:788px;top:275px;width:2px;height:3px;background:#444;"></div>
<div class="b" style="left:788px;top:288px;width:2px;height:4px;background:#444;"></div>
<div class="b" style="left:788px;top:361px;width:2px;height:9px;background:#555;"></div>
<div class="b" style="left:788px;top:417px;width:2px;height:10px;background:#555;"></div>
<div class="b" style="left:788px;top:465px;width:2px;height:8px;background:#666;"></div>
<div class="b" style="left:788px;top:485px;width:2px;height:7px;background:#666;"></div>
<div class="b" style="left:788px;top:528px;width:2px;height:7px;background:#666;"></div>
<div class="b" style="left:788px;top:545px;width:2px;height:8px;background:#777;"></div>
<div class="b" style="left:788px;top:561px;width:2px;height:11px;background:#777;"></div>
<div class="b" style="left:788px;top:576px;width:2px;height:2px;background:#b03030;"></div>
<div class="b" style="left:788px;top:579px;width:2px;height:2px;background:#d06060;"></div>
<div class="b" style="left:788px;top:582px;width:2px;height:2px;background:#b03030;"></div>
<div class="b" style="left:788px;top:585px;width:2px;height:2px;background:#d06060;"></div>
<div class="b" style="left:788px;top:588px;width:2px;height:2px;background:#b03030;"></div>
<div class="b" style="left:788px;top:590px;width:2px;height:3px;background:#d07070;"></div>
<div class="b" style="left:788px;top:593px;width:2px;height:4px;background:#e8e0d0;"></div>
<div class="b" style="left:788px;top:597px;width:2px;height:16px;background:#a82828;"></div>
<div class="b" style="left:788px;top:613px;width:2px;height:3px;background:#e0d0c0;"></div>
<div class="b" style="left:788px;top:616px;width:2px;height:8px;background:#101010;"></div>
<div class="b" style="left:788px;top:624px;width:2px;height:7px;background:#c01818;"></div>
<div class="b" style="left:788px;top:631px;width:2px;height:9px;background:#e0b020;"></div>
<div class="b" style="left:788px;top:640px;width:2px;height:20px;background:#d8d0c8;"></div>
</body></html>
